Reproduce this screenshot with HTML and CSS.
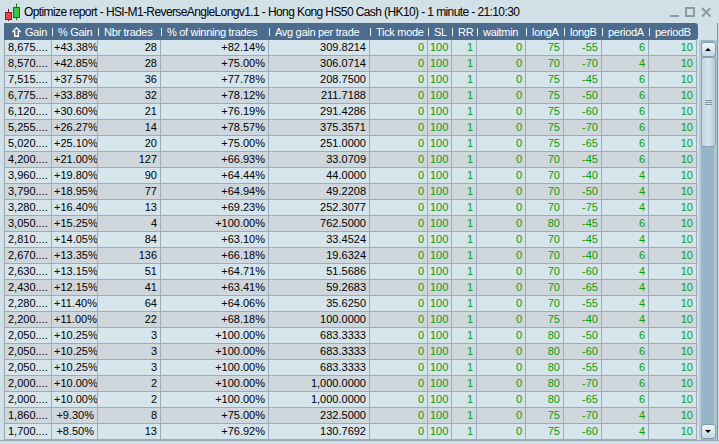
FILE: index.html
```html
<!DOCTYPE html>
<html>
<head>
<meta charset="utf-8">
<link rel="stylesheet" href="styles.css">
</head>
<body>
<div class="window">
  <div class="titlebar">
    <svg class="app-icon" width="17" height="20" viewBox="0 0 17 20">
      <line x1="4.5" y1="7" x2="4.5" y2="19" stroke="#6a2020" stroke-width="1"/>
      <rect x="1.5" y="10.5" width="6" height="7" fill="#e84a4a" stroke="#7a2020"/>
      <line x1="12.5" y1="1.5" x2="12.5" y2="18" stroke="#1f6a1f" stroke-width="1"/>
      <rect x="9.5" y="5.5" width="6" height="10" fill="#3cc83c" stroke="#1f6a1f"/>
    </svg>
    <span class="title">Optimize report - HSI-M1-ReverseAngleLongv1.1 - Hong Kong HS50 Cash (HK10) - 1 minute - 21:10:30</span>
    <div class="controls">
      <svg width="10" height="12" viewBox="0 0 10 12"><rect x="0" y="8" width="9" height="2" fill="#8b9ca8"/></svg>
      <svg width="11" height="12" viewBox="0 0 11 12"><rect x="1" y="1" width="8" height="8" fill="none" stroke="#8b9ca8" stroke-width="2"/></svg>
      <svg width="11" height="12" viewBox="0 0 11 12"><path d="M1 1 L9.5 9.5 M9.5 1 L1 9.5" stroke="#8b9ca8" stroke-width="2" fill="none"/></svg>
    </div>
  </div>

  <div class="main">
    <div class="grid">
      <div class="head">
        <div class="hc first"><svg class="sort" width="9" height="10" viewBox="0 0 9 10"><path d="M4.5 0.8 L8.2 4.6 L6.3 4.6 L6.3 9.2 L2.7 9.2 L2.7 4.6 L0.8 4.6 Z" fill="none" stroke="#ffffff" stroke-width="1.4" stroke-linejoin="miter"/></svg><span>Gain</span></div>
        <div class="hc"><i class="sep"></i><span>% Gain</span></div>
        <div class="hc"><i class="sep"></i><span>Nbr trades</span></div>
        <div class="hc"><i class="sep"></i><span>% of winning trades</span></div>
        <div class="hc"><i class="sep"></i><span>Avg gain per trade</span></div>
        <div class="hc"><i class="sep"></i><span>Tick mode</span></div>
        <div class="hc"><i class="sep"></i><span>SL</span></div>
        <div class="hc"><i class="sep"></i><span>RR</span></div>
        <div class="hc"><i class="sep"></i><span>waitmin</span></div>
        <div class="hc"><i class="sep"></i><span>longA</span></div>
        <div class="hc"><i class="sep"></i><span>longB</span></div>
        <div class="hc"><i class="sep"></i><span>periodA</span></div>
        <div class="hc"><i class="sep"></i><span>periodB</span></div>
      </div>
      <div class="body-row">
        <div class="rows">
          <div class="row"><span>8,675....</span><span>+43.38%</span><span>28</span><span>+82.14%</span><span>309.8214</span><span>0</span><span>100</span><span>1</span><span>0</span><span>75</span><span>-55</span><span>6</span><span>10</span></div>
          <div class="row"><span>8,570....</span><span>+42.85%</span><span>28</span><span>+75.00%</span><span>306.0714</span><span>0</span><span>100</span><span>1</span><span>0</span><span>70</span><span>-70</span><span>4</span><span>10</span></div>
          <div class="row"><span>7,515....</span><span>+37.57%</span><span>36</span><span>+77.78%</span><span>208.7500</span><span>0</span><span>100</span><span>1</span><span>0</span><span>75</span><span>-45</span><span>6</span><span>10</span></div>
          <div class="row"><span>6,775....</span><span>+33.88%</span><span>32</span><span>+78.12%</span><span>211.7188</span><span>0</span><span>100</span><span>1</span><span>0</span><span>75</span><span>-50</span><span>6</span><span>10</span></div>
          <div class="row"><span>6,120....</span><span>+30.60%</span><span>21</span><span>+76.19%</span><span>291.4286</span><span>0</span><span>100</span><span>1</span><span>0</span><span>75</span><span>-60</span><span>6</span><span>10</span></div>
          <div class="row"><span>5,255....</span><span>+26.27%</span><span>14</span><span>+78.57%</span><span>375.3571</span><span>0</span><span>100</span><span>1</span><span>0</span><span>75</span><span>-70</span><span>6</span><span>10</span></div>
          <div class="row"><span>5,020....</span><span>+25.10%</span><span>20</span><span>+75.00%</span><span>251.0000</span><span>0</span><span>100</span><span>1</span><span>0</span><span>75</span><span>-65</span><span>6</span><span>10</span></div>
          <div class="row"><span>4,200....</span><span>+21.00%</span><span>127</span><span>+66.93%</span><span>33.0709</span><span>0</span><span>100</span><span>1</span><span>0</span><span>70</span><span>-45</span><span>6</span><span>10</span></div>
          <div class="row"><span>3,960....</span><span>+19.80%</span><span>90</span><span>+64.44%</span><span>44.0000</span><span>0</span><span>100</span><span>1</span><span>0</span><span>70</span><span>-40</span><span>4</span><span>10</span></div>
          <div class="row"><span>3,790....</span><span>+18.95%</span><span>77</span><span>+64.94%</span><span>49.2208</span><span>0</span><span>100</span><span>1</span><span>0</span><span>70</span><span>-50</span><span>4</span><span>10</span></div>
          <div class="row"><span>3,280....</span><span>+16.40%</span><span>13</span><span>+69.23%</span><span>252.3077</span><span>0</span><span>100</span><span>1</span><span>0</span><span>70</span><span>-75</span><span>4</span><span>10</span></div>
          <div class="row"><span>3,050....</span><span>+15.25%</span><span>4</span><span>+100.00%</span><span>762.5000</span><span>0</span><span>100</span><span>1</span><span>0</span><span>80</span><span>-45</span><span>6</span><span>10</span></div>
          <div class="row"><span>2,810....</span><span>+14.05%</span><span>84</span><span>+63.10%</span><span>33.4524</span><span>0</span><span>100</span><span>1</span><span>0</span><span>70</span><span>-45</span><span>4</span><span>10</span></div>
          <div class="row"><span>2,670....</span><span>+13.35%</span><span>136</span><span>+66.18%</span><span>19.6324</span><span>0</span><span>100</span><span>1</span><span>0</span><span>70</span><span>-40</span><span>6</span><span>10</span></div>
          <div class="row"><span>2,630....</span><span>+13.15%</span><span>51</span><span>+64.71%</span><span>51.5686</span><span>0</span><span>100</span><span>1</span><span>0</span><span>70</span><span>-60</span><span>4</span><span>10</span></div>
          <div class="row"><span>2,430....</span><span>+12.15%</span><span>41</span><span>+63.41%</span><span>59.2683</span><span>0</span><span>100</span><span>1</span><span>0</span><span>70</span><span>-65</span><span>4</span><span>10</span></div>
          <div class="row"><span>2,280....</span><span>+11.40%</span><span>64</span><span>+64.06%</span><span>35.6250</span><span>0</span><span>100</span><span>1</span><span>0</span><span>70</span><span>-55</span><span>4</span><span>10</span></div>
          <div class="row"><span>2,200....</span><span>+11.00%</span><span>22</span><span>+68.18%</span><span>100.0000</span><span>0</span><span>100</span><span>1</span><span>0</span><span>75</span><span>-40</span><span>4</span><span>10</span></div>
          <div class="row"><span>2,050....</span><span>+10.25%</span><span>3</span><span>+100.00%</span><span>683.3333</span><span>0</span><span>100</span><span>1</span><span>0</span><span>80</span><span>-50</span><span>6</span><span>10</span></div>
          <div class="row"><span>2,050....</span><span>+10.25%</span><span>3</span><span>+100.00%</span><span>683.3333</span><span>0</span><span>100</span><span>1</span><span>0</span><span>80</span><span>-60</span><span>6</span><span>10</span></div>
          <div class="row"><span>2,050....</span><span>+10.25%</span><span>3</span><span>+100.00%</span><span>683.3333</span><span>0</span><span>100</span><span>1</span><span>0</span><span>80</span><span>-55</span><span>6</span><span>10</span></div>
          <div class="row"><span>2,000....</span><span>+10.00%</span><span>2</span><span>+100.00%</span><span>1,000.0000</span><span>0</span><span>100</span><span>1</span><span>0</span><span>80</span><span>-70</span><span>6</span><span>10</span></div>
          <div class="row"><span>2,000....</span><span>+10.00%</span><span>2</span><span>+100.00%</span><span>1,000.0000</span><span>0</span><span>100</span><span>1</span><span>0</span><span>80</span><span>-65</span><span>6</span><span>10</span></div>
          <div class="row"><span>1,860....</span><span>+9.30%</span><span>8</span><span>+75.00%</span><span>232.5000</span><span>0</span><span>100</span><span>1</span><span>0</span><span>75</span><span>-70</span><span>4</span><span>10</span></div>
          <div class="row"><span>1,700....</span><span>+8.50%</span><span>13</span><span>+76.92%</span><span>130.7692</span><span>0</span><span>100</span><span>1</span><span>0</span><span>75</span><span>-60</span><span>4</span><span>10</span></div>
        </div>
        <div class="scrollbar">
          <div class="sb-btn"><i class="tri up"></i></div>
          <div class="sb-thumb"><i class="grip"></i></div>
          <div class="sb-track"></div>
          <div class="sb-btn"><i class="tri down"></i></div>
        </div>
      </div>
    </div>
    <div class="edge"></div>
  </div>
  <div class="footer"></div>
</div>
</body>
</html>
```

FILE: styles.css
```css
* { box-sizing: border-box; }
html, body { margin: 0; padding: 0; }
body {
  background: #d2e0e7;
  font-family: "Liberation Sans", Arial, sans-serif;
  width: 719px;
  height: 444px;
  overflow: hidden;
}
.window {
  width: 719px;
  height: 444px;
  display: flex;
  flex-direction: column;
  background: #d2e0e7;
}
.titlebar {
  height: 23px;
  display: flex;
  align-items: flex-start;
  position: relative;
}
.app-icon { margin: 2px 0 0 4px; flex: none; }
.title {
  font-size: 12px;
  letter-spacing: -0.6px;
  line-height: 14px;
  margin: 5px 0 0 3px;
  color: #000;
  white-space: nowrap;
}
.controls {
  margin-left: auto;
  display: flex;
  gap: 5px;
  margin-top: 7px;
  margin-right: 7px;
}
.controls svg { display: block; }
.main {
  flex: 1;
  display: flex;
  padding-left: 4px;
}
.grid {
  display: flex;
  flex-direction: column;
}
.head {
  width: 694px;
  height: 17px;
  background: #4c6c8e;
  border-radius: 0 3px 3px 0;
  display: grid;
  grid-template-columns: 48px 46px 63px 108px 101px 58px 24px 25px 49px 38px 38px 47px 49px;
  color: #fff;
  font-size: 11px;
  letter-spacing: -0.3px;
}
.hc {
  display: flex;
  align-items: center;
  white-space: nowrap;
  overflow: hidden;
}
.hc.first { padding-left: 8px; }
.sort { margin-right: 4px; flex: none; }
.sep {
  width: 1px;
  height: 8px;
  background: #e6eef5;
  margin-right: 5px;
  flex: none;
}
.body-row {
  display: flex;
  gap: 1px;
}
.rows {
  width: 694px;
  border-left: 1px solid #97a7b3;
}
.row {
  display: grid;
  grid-template-columns: 47px 46px 63px 108px 101px 58px 24px 25px 49px 38px 38px 47px 48px;
  height: 16px;
  background: #d6e4ec;
  font-size: 11px;
}
.row:nth-child(even) { background: #cfd6dc; }
.row span {
  border-right: 1px solid #9eacb6;
  border-bottom: 1px solid #9eacb6;
  line-height: 15px;
  padding: 0 3px 0 2px;
  text-align: right;
  white-space: nowrap;
  overflow: hidden;
  color: #000;
}
.row span:first-child { text-align: left; padding-left: 3px; }
.row span:nth-child(n+6) { color: #0a9c0a; }
.scrollbar {
  width: 18px;
  display: flex;
  flex-direction: column;
  align-items: center;
  padding: 2px 0 1px;
  background: linear-gradient(to right, #b7ccd8 0, #b7ccd8 2px, #98b5c5 2px, #98b5c5 15px, #afc6d3 15px);
}
.sb-btn {
  width: 15px;
  height: 15px;
  border: 1px solid #7f9bac;
  border-radius: 3px;
  background: linear-gradient(to bottom, #eef5f8, #c6d9e3);
  display: flex;
  align-items: center;
  justify-content: center;
  flex: none;
}
.tri {
  width: 0; height: 0;
  border-left: 3px solid transparent;
  border-right: 3px solid transparent;
}
.tri.up { border-bottom: 3px solid #000; }
.tri.down { border-top: 3px solid #000; }
.sb-thumb {
  width: 15px;
  height: 90px;
  border: 1px solid #86a2b3;
  border-radius: 3px;
  background: linear-gradient(to right, #c3d7e1, #d6e5ec 50%, #b4cbd8);
  display: flex;
  align-items: center;
  justify-content: center;
  flex: none;
}
.grip {
  width: 7px;
  height: 5px;
  border-top: 1px solid #7c97a7;
  border-bottom: 1px solid #7c97a7;
  background: linear-gradient(#7c97a7, #7c97a7) center / 7px 1px no-repeat;
}
.sb-track { flex: 1; }
.edge {
  width: 3px;
  border-left: 1px solid #7e95a4;
}
.footer {
  height: 4px;
  border-top: 1px solid #98a8b4;
  background: #d0dde4;
}
```
